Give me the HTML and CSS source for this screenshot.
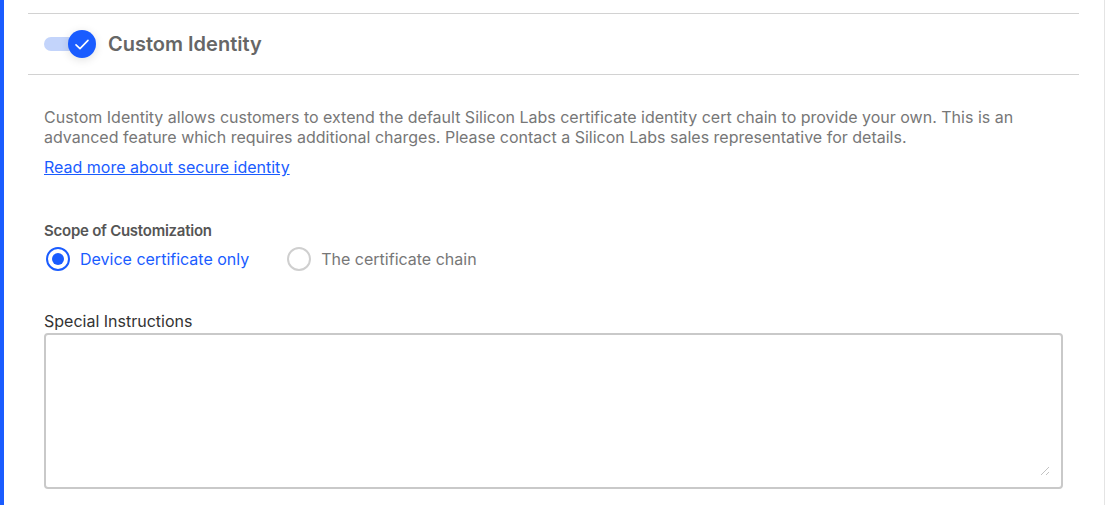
FILE: index.html
```html
<!DOCTYPE html>
<html>
<head>
<meta charset="utf-8">
<link rel="stylesheet" href="styles.css">
</head>
<body>
<div class="accent"></div>
<div class="main">
  <div class="section">
    <div class="header">
      <div class="toggle">
        <div class="track"></div>
        <div class="knob">
          <svg width="16" height="13" viewBox="0 0 16 13"><path d="M2 6.8 L6 10.6 L14 2.4" fill="none" stroke="#fff" stroke-width="1.6" stroke-linecap="round" stroke-linejoin="round"/></svg>
        </div>
      </div>
      <h2 class="title">Custom Identity</h2>
    </div>
    <div class="body">
      <p class="desc">Custom Identity allows customers to extend the default Silicon Labs certificate identity cert chain to provide your own. This is an advanced feature which requires additional charges. Please contact a Silicon Labs sales representative for details.</p>
      <a class="link" href="#">Read more about secure identity</a>
      <div class="scope-label">Scope of Customization</div>
      <div class="radios">
        <label class="radio checked"><span class="dot"></span>Device certificate only</label>
        <label class="radio"><span class="dot"></span>The certificate chain</label>
      </div>
      <div class="field-label">Special Instructions</div>
      <div class="textarea"><span class="grip"></span></div>
    </div>
  </div>
</div>
</body>
</html>
```
FILE: styles.css
```css
html, body { margin: 0; padding: 0; background: #fff; }
body {
  display: flex;
  height: 505px;
  overflow: hidden;
  font-family: Inter, "Liberation Sans", sans-serif;
}
.accent { width: 4px; background: #1a5cff; flex: none; }
.main {
  flex: 1;
  border-right: 1px solid #e4e4e4;
  padding: 13px 25px 0 24px;
}
.header {
  display: flex;
  align-items: center;
  height: 60px;
  border-top: 1px solid #d2d2d2;
  border-bottom: 1px solid #d2d2d2;
  padding-left: 16px;
}
.toggle { position: relative; width: 52px; height: 28px; margin-right: 12px; }
.track {
  position: absolute; left: 0; top: 7px; width: 40px; height: 14px;
  border-radius: 7px; background: #c3d4fb;
}
.knob {
  position: absolute; left: 24px; top: 0; width: 28px; height: 28px;
  border-radius: 50%; background: #1a5cff;
  display: flex; align-items: center; justify-content: center;
  box-shadow: 0 2px 10px rgba(0,0,0,0.12);
}
.title {
  margin: 0; font-size: 20px; font-weight: 600; color: #666;
}
.body { padding: 32px 16px 0 16px; }
.desc {
  margin: 0; font-size: 16px; line-height: 20px; color: #777;
}
.link {
  display: inline-block; margin-top: 10px; font-size: 16px; line-height: 20px;
  color: #1a5cff; text-decoration: underline;
}
.scope-label {
  margin-top: 44px; font-size: 15px; font-weight: 600; color: #555; line-height: 20px;
  letter-spacing: -0.25px;
}
.radios { display: flex; margin-top: 6px; height: 24px; align-items: center; }
.radio {
  display: flex; align-items: center; font-size: 16px; color: #777; margin-right: 36px;
}
.dot {
  width: 20px; height: 20px; border-radius: 50%; border: 2px solid #cfcfcf;
  margin-left: 2px; margin-right: 10px; position: relative;
}
.radio.checked { color: #1a5cff; }
.radio.checked .dot { border-color: #1a5cff; }
.radio.checked .dot::after {
  content: ""; position: absolute; left: 4px; top: 4px; width: 12px; height: 12px;
  border-radius: 50%; background: #1a5cff;
}
.field-label {
  margin-top: 40px; font-size: 16px; color: #333; line-height: 20px;
}
.textarea {
  margin-top: 2px; height: 152px; border: 2px solid #c9c9c9; border-radius: 4px;
  position: relative;
}
.grip {
  position: absolute; right: 12px; bottom: 12px; width: 8px; height: 8px;
  background: linear-gradient(135deg, transparent 45%, #aaa 45%, #aaa 55%, transparent 55%),
              linear-gradient(135deg, transparent 75%, #aaa 75%, #aaa 85%, transparent 85%);
  opacity: 0.7;
}
```
